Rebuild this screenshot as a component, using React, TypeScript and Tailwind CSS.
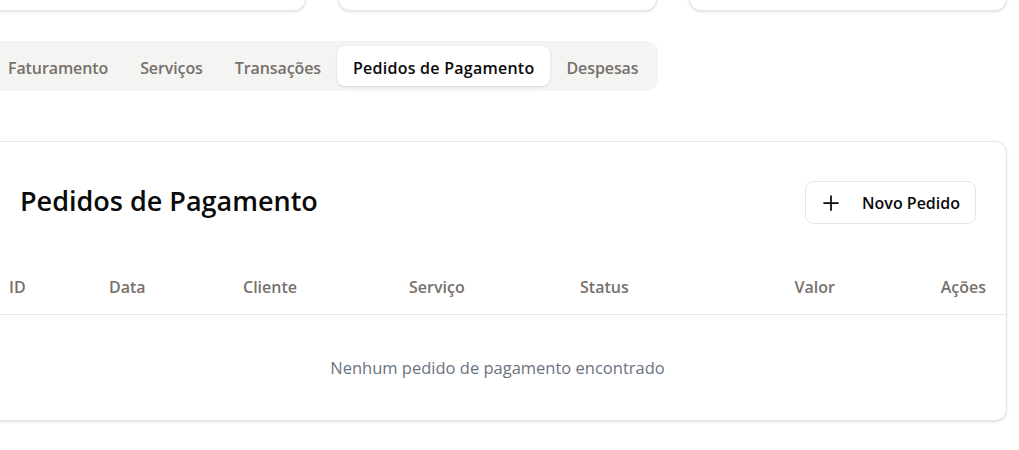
import React from 'react';
import { Plus } from 'lucide-react';

const tabs = ['Faturamento', 'Serviços', 'Transações', 'Pedidos de Pagamento', 'Despesas'];

const columns = [
  { label: 'ID', className: 'w-[100px] text-left' },
  { label: 'Data', className: 'w-[134px] text-left' },
  { label: 'Cliente', className: 'w-[166px] text-left' },
  { label: 'Serviço', className: 'w-[171px] text-left' },
  { label: 'Status', className: 'w-[150px] text-left' },
  { label: 'Valor', className: 'w-[145px] text-right' },
  { label: 'Ações', className: 'w-[151px] text-right' },
];

const StatCard: React.FC = () => (
  <div className="h-[120px] rounded-xl border border-[#e7e7e7] bg-white shadow-sm" />
);

const App: React.FC = () => {
  const active = 'Pedidos de Pagamento';

  return (
    <div className="min-h-[450px] overflow-hidden bg-white font-['Open_Sans',sans-serif]">
      <div className="ml-[-12px] mt-[-109px] w-[1019px]">
        <div className="grid grid-cols-3 gap-8">
          <StatCard />
          <StatCard />
          <StatCard />
        </div>

        <div className="mt-[30px] inline-flex rounded-xl bg-[#f4f4f3] px-1 py-[5px]">
          {tabs.map((t) => (
            <button
              key={t}
              className={
                t === active
                  ? 'h-10 rounded-lg bg-white px-4 pt-[3px] text-[16px] font-semibold tracking-[0.25px] text-[#0a0a0a] shadow-sm'
                  : 'h-10 rounded-lg px-4 pt-[3px] text-[16px] font-semibold tracking-[-0.1px] text-[#77706b]'
              }
            >
              {t}
            </button>
          ))}
        </div>

        <div className="mt-[50px] rounded-xl border border-[#e7e7e7] bg-white shadow-sm">
          <div className="flex items-center justify-between pl-[31px] pr-[30px] pt-[39px] pb-[34px]">
            <h2 className="mt-[-4px] text-[27px] font-semibold leading-none text-[#0a0a0a]">Pedidos de Pagamento</h2>
            <button className="flex h-[43px] items-center gap-[19px] rounded-lg border border-[#e7e7e7] bg-white pl-[13px] pr-[15px] text-[16px] font-semibold text-[#0a0a0a]">
              <Plus size={24} strokeWidth={1.75} />
              Novo Pedido
            </button>
          </div>

          <table className="w-full table-fixed border-collapse">
            <thead>
              <tr className="border-b border-[#e7e7e7]">
                {columns.map((c) => (
                  <th
                    key={c.label}
                    className={`h-14 px-5 pt-[2px] text-[16px] font-semibold text-[#77706b] ${c.className}`}
                  >
                    {c.label}
                  </th>
                ))}
              </tr>
            </thead>
            <tbody>
              <tr>
                <td colSpan={7} className="h-[106px] pt-[2px] text-center text-[16.5px] text-[#6b7280]">
                  Nenhum pedido de pagamento encontrado
                </td>
              </tr>
            </tbody>
          </table>
        </div>
      </div>
    </div>
  );
};

export default App;
